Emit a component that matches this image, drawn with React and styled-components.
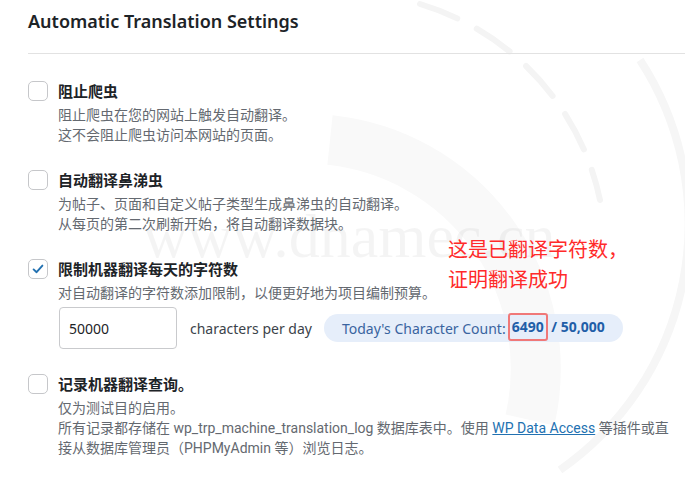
import styled, { createGlobalStyle } from "styled-components";

const GlobalStyle = createGlobalStyle`
  html, body {
    margin: 0;
    padding: 0;
    background: #fff;
  }
  body {
    font-family: "Segoe UI", "Noto Sans", "Noto Sans CJK SC", sans-serif;
    color: #1d2327;
  }
`;

const options = [
  {
    label: "阻止爬虫",
    desc: ["阻止爬虫在您的网站上触发自动翻译。", "这不会阻止爬虫访问本网站的页面。"],
  },
  {
    label: "自动翻译鼻涕虫",
    desc: [
      "为帖子、页面和自定义帖子类型生成鼻涕虫的自动翻译。",
      "从每页的第二次刷新开始，将自动翻译数据块。",
    ],
  },
  {
    label: "限制机器翻译每天的字符数",
    desc: ["对自动翻译的字符数添加限制，以便更好地为项目编制预算。"],
    checked: true,
    limit: true,
  },
  {
    label: "记录机器翻译查询。",
    desc: ["仅为测试目的启用。"],
    log: true,
  },
];

function CheckIcon() {
  return (
    <svg width="14" height="14" viewBox="0 0 14 14">
      <path
        d="M2.6 7.4 L5.6 10.2 L11.4 3.6"
        fill="none"
        stroke="#2271b1"
        strokeWidth="1.9"
        strokeLinecap="round"
        strokeLinejoin="round"
      />
    </svg>
  );
}

function App() {
  return (
    <Page>
      <GlobalStyle />
      <Watermark aria-hidden="true">
        <svg width="685" height="481" viewBox="0 0 685 481">
          <path
            d="M420 4 A 260 260 0 0 1 600 200"
            fill="none"
            stroke="#f4f4f4"
            strokeWidth="6"
            strokeLinecap="round"
            strokeDasharray="40 22"
          />
          <path
            d="M330 140 A 230 230 0 0 1 530 420"
            fill="none"
            stroke="#f9f9f9"
            strokeWidth="50"
          />
          <path
            d="M560 470 A 300 300 0 0 0 640 60"
            fill="none"
            stroke="#f6f6f6"
            strokeWidth="8"
          />
        </svg>
        <WatermarkText>www.dnamec.cn</WatermarkText>
      </Watermark>

      <Header>
        <Title>Automatic Translation Settings</Title>
      </Header>

      <List>
        {options.map((opt) => (
          <Option key={opt.label}>
            <Box $checked={opt.checked}>{opt.checked && <CheckIcon />}</Box>
            <Body>
              <Label>{opt.label}</Label>
              {opt.desc.map((line) => (
                <Desc key={line}>{line}</Desc>
              ))}
              {opt.log && (
                <Desc>
                  所有记录都存储在 wp_trp_machine_translation_log
                  数据库表中。使用 <Link href="#">WP Data Access</Link>{" "}
                  等插件或直接从数据库管理员（PHPMyAdmin 等）浏览日志。
                </Desc>
              )}
              {opt.limit && (
                <LimitRow>
                  <NumberInput defaultValue="50000" />
                  <Unit>characters per day</Unit>
                  <CountPill>
                    Today's Character Count:
                    <Count>
                      <Marked>6490</Marked> / 50,000
                    </Count>
                  </CountPill>
                </LimitRow>
              )}
            </Body>
          </Option>
        ))}
      </List>

      <Note>
        这是已翻译字符数，
        <br />
        证明翻译成功
      </Note>
    </Page>
  );
}

const Page = styled.div`
  position: relative;
  width: 685px;
  height: 481px;
  overflow: hidden;
  padding-left: 28px;
  box-sizing: border-box;
`;

const Watermark = styled.div`
  position: absolute;
  inset: 0;
  pointer-events: none;
  svg {
    position: absolute;
    left: 0;
    top: 0;
  }
`;

const WatermarkText = styled.div`
  position: absolute;
  left: 143px;
  top: 200px;
  font-family: "Liberation Serif", serif;
  font-size: 62px;
  line-height: 72px;
  color: rgba(0, 0, 0, 0.045);
  white-space: nowrap;
`;

const Header = styled.div`
  position: relative;
  padding: 6px 0 17px;
  border-bottom: 1px solid #e2e2e2;
`;

const Title = styled.h1`
  margin: 0;
  font-size: 18px;
  line-height: 30px;
  font-weight: 600;
  color: #1d2327;
`;

const List = styled.div`
  position: relative;
  padding-top: 27px;
  display: flex;
  flex-direction: column;
  gap: 25px;
`;

const Option = styled.div`
  display: flex;
  align-items: flex-start;
  gap: 10px;
`;

const Box = styled.span`
  flex: none;
  width: 20px;
  height: 20px;
  box-sizing: border-box;
  border: 1px solid #c6c7ca;
  border-radius: 5px;
  background: #fff;
  display: flex;
  align-items: center;
  justify-content: center;
`;

const Body = styled.div`
  display: flex;
  flex-direction: column;
  padding-right: 8px;
`;

const Label = styled.div`
  font-size: 15px;
  line-height: 20px;
  font-weight: 700;
  color: #1d2327;
  margin-bottom: 4px;
`;

const Desc = styled.div`
  font-family: Roboto, "Noto Sans CJK SC", sans-serif;
  font-size: 14px;
  line-height: 20px;
  color: #646970;
`;

const Link = styled.a`
  color: #2271b1;
  text-decoration: underline;
`;

const LimitRow = styled.div`
  display: flex;
  align-items: center;
  margin-top: 4px;
  margin-left: 1px;
`;

const NumberInput = styled.input`
  width: 118px;
  height: 42px;
  box-sizing: border-box;
  border: 1px solid #c9cacd;
  border-radius: 4px;
  padding: 0 9px;
  font-family: inherit;
  font-size: 14px;
  color: #1d2327;
  outline: none;
`;

const Unit = styled.span`
  margin: 0 12px 0 13px;
  font-size: 14px;
  color: #3c434a;
`;

const CountPill = styled.span`
  display: inline-flex;
  align-items: center;
  height: 28px;
  padding: 0 18px;
  border-radius: 14px;
  background: #e6eefa;
  color: #3a64a0;
  font-size: 14px;
  white-space: nowrap;
`;

const Count = styled.b`
  margin-left: 2px;
  color: #1f5ea8;
  font-weight: 700;
`;

const Marked = styled.span`
  display: inline-block;
  padding: 2px 2px;
  border: 2px solid #f07878;
  border-radius: 3px;
  line-height: 20px;
  margin-top: -2px;
`;

const Note = styled.div`
  position: absolute;
  left: 448px;
  top: 234px;
  font-family: "Noto Sans CJK SC", sans-serif;
  font-size: 20px;
  line-height: 30px;
  color: #ff2a2a;
`;

export default App;
